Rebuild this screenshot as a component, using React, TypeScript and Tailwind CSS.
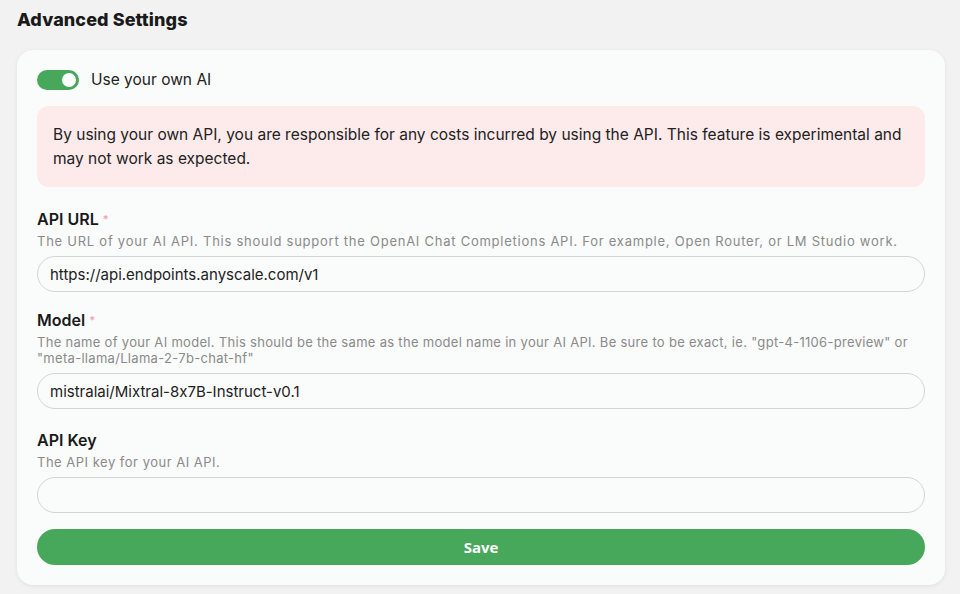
import { useState } from "react";

const font = { fontFamily: "Inter, 'Open Sans', sans-serif" };

export default function App() {
  const [enabled, setEnabled] = useState(true);
  const [apiUrl, setApiUrl] = useState("https://api.endpoints.anyscale.com/v1");
  const [model, setModel] = useState("mistralai/Mixtral-8x7B-Instruct-v0.1");
  const [apiKey, setApiKey] = useState("");

  return (
    <div
      className="min-h-[594px] bg-[#f2f2f2] pl-[17px] pr-[15px] pt-[9px] pb-[9px] text-[#1d1d1f] [font-feature-settings:'calt'_0]"
      style={font}
    >
      <h1 className="text-[18px] font-extrabold leading-[22px] mb-[19px] text-[#1a1a1a] tracking-[0.1px]">
        Advanced Settings
      </h1>

      <div className="rounded-2xl bg-[#fafbfb] p-5 shadow-[0_1px_4px_rgba(0,0,0,0.08)]">
        <label className="flex items-center gap-3 h-5 cursor-pointer">
          <button
            type="button"
            onClick={() => setEnabled(!enabled)}
            className={`relative w-[42px] h-5 rounded-full ${enabled ? "bg-[#47a85b]" : "bg-gray-300"}`}
          >
            <span
              className={`absolute top-[3px] w-[14px] h-[14px] rounded-full bg-white ${enabled ? "left-[25px]" : "left-[3px]"}`}
            />
          </button>
          <span className="text-[15.5px] text-[#222]">Use your own AI</span>
        </label>

        <div className="mt-4 rounded-xl bg-[#fdeaea] px-4 pt-[17px] pb-4 text-[15.5px] leading-6 text-[#222]">
          By using your own API, you are responsible for any costs incurred by using the API. This feature is
          experimental and may not work as expected.
        </div>

        <Field
          label="API URL"
          required
          description="The URL of your AI API. This should support the OpenAI Chat Completions API. For example, Open Router, or LM Studio work."
          value={apiUrl}
          onChange={setApiUrl}
          className="mt-5"
          descClass="tracking-[0.75px]"
        />
        <Field
          label="Model"
          required
          description={'The name of your AI model. This should be the same as the model name in your AI API. Be sure to be exact, ie. "gpt-4-1106-preview" or "meta-llama/Llama-2-7b-chat-hf"'}
          value={model}
          onChange={setModel}
          className="mt-4"
          descClass="tracking-[0.3px]"
        />
        <Field
          label="API Key"
          description="The API key for your AI API."
          value={apiKey}
          onChange={setApiKey}
          className="mt-[19px]"
          descClass="tracking-[0.5px]"
        />

        <button
          type="button"
          className="mt-4 w-full h-9 rounded-full bg-[#47a85b] text-white text-[15px] font-bold"
          style={{ fontFamily: "'Open Sans', sans-serif" }}
        >
          Save
        </button>
      </div>
    </div>
  );
}

function Field({
  label,
  required,
  description,
  value,
  onChange,
  className,
  descClass,
}: {
  label: string;
  required?: boolean;
  description: string;
  value: string;
  onChange: (v: string) => void;
  className?: string;
  descClass?: string;
}) {
  return (
    <div className={className}>
      <div className="text-[16px] font-semibold leading-6 text-[#1a1a1a]">
        {label}
        {required && <span className="ml-1 text-[11px] align-top text-[#f0a3b0]">*</span>}
      </div>
      <p className={`mt-0.5 text-[13px] leading-4 text-[#8a8a8a] ${descClass ?? ""}`}>{description}</p>
      <input
        value={value}
        onChange={(e) => onChange(e.target.value)}
        className="mt-[7px] block w-full h-9 rounded-full border border-[#d4d4d8] bg-[#fafbfb] px-3 text-[15px] text-[#222] outline-none"
      />
    </div>
  );
}
